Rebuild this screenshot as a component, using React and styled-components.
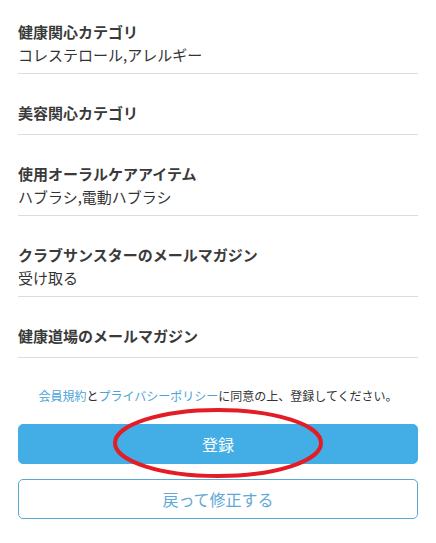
import React from "react";
import styled, { createGlobalStyle } from "styled-components";

const Global = createGlobalStyle`
  html, body { margin: 0; padding: 0; background: #fff; }
  body { font-family: "Noto Sans CJK JP", "Noto Sans", sans-serif; color: #333; }
`;

const Page = styled.div`
  width: 436px;
  padding: 0 18px;
  box-sizing: border-box;
`;

const List = styled.div`
  display: flex;
  flex-direction: column;
`;

const Row = styled.div`
  padding: 29px 0 8px;
  border-bottom: 1px solid #dcdcdc;
  &:first-child { padding-top: 22px; }
`;

const Label = styled.div`
  font-size: 15px;
  line-height: 20px;
  font-weight: 700;
  color: #3a3a3a;
  margin-bottom: 3px;
`;

const Value = styled.div`
  font-size: 15px;
  line-height: 20px;
  color: #333;
  &:empty { display: none; }
`;

const Notice = styled.p`
  margin: 29px 0 19px;
  text-align: center;
  font-size: 12px;
  line-height: 18px;
  color: #333;
`;

const Link = styled.a`
  color: #4aa3d6;
  text-decoration: none;
`;

const Actions = styled.div`
  display: flex;
  flex-direction: column;
  gap: 15px;
  position: relative;
`;

const Button = styled.button`
  display: flex;
  align-items: center;
  justify-content: center;
  width: 100%;
  height: 40px;
  border-radius: 5px;
  font-family: inherit;
  font-size: 16px;
  cursor: pointer;
  box-sizing: border-box;
  border: 1px solid ${(p) => (p.$primary ? "#43aee5" : "#5aa9d4")};
  background: ${(p) => (p.$primary ? "#43aee5" : "#fff")};
  color: ${(p) => (p.$primary ? "#fff" : "#5fa9d6")};
`;

const Mark = styled.svg`
  position: absolute;
  left: 95px;
  top: -16px;
  width: 212px;
  height: 72px;
  pointer-events: none;
  overflow: visible;
`;

const rows = [
  { label: "健康関心カテゴリ", value: "コレステロール,アレルギー" },
  { label: "美容関心カテゴリ", value: "" },
  { label: "使用オーラルケアアイテム", value: "ハブラシ,電動ハブラシ" },
  { label: "クラブサンスターのメールマガジン", value: "受け取る" },
  { label: "健康道場のメールマガジン", value: "" },
];

export default function App() {
  return (
    <>
      <Global />
      <Page>
        <List>
          {rows.map((r) => (
            <Row key={r.label}>
              <Label>{r.label}</Label>
              <Value>{r.value}</Value>
            </Row>
          ))}
        </List>
        <Notice>
          <Link href="#">会員規約</Link>と<Link href="#">プライバシーポリシー</Link>に同意の上、登録してください。
        </Notice>
        <Actions>
          <Button $primary>登録</Button>
          <Button>戻って修正する</Button>
          <Mark viewBox="0 0 212 72">
            <ellipse cx="105" cy="35" rx="103" ry="33" fill="none" stroke="#e31c25" strokeWidth="4" />
          </Mark>
        </Actions>
      </Page>
    </>
  );
}
